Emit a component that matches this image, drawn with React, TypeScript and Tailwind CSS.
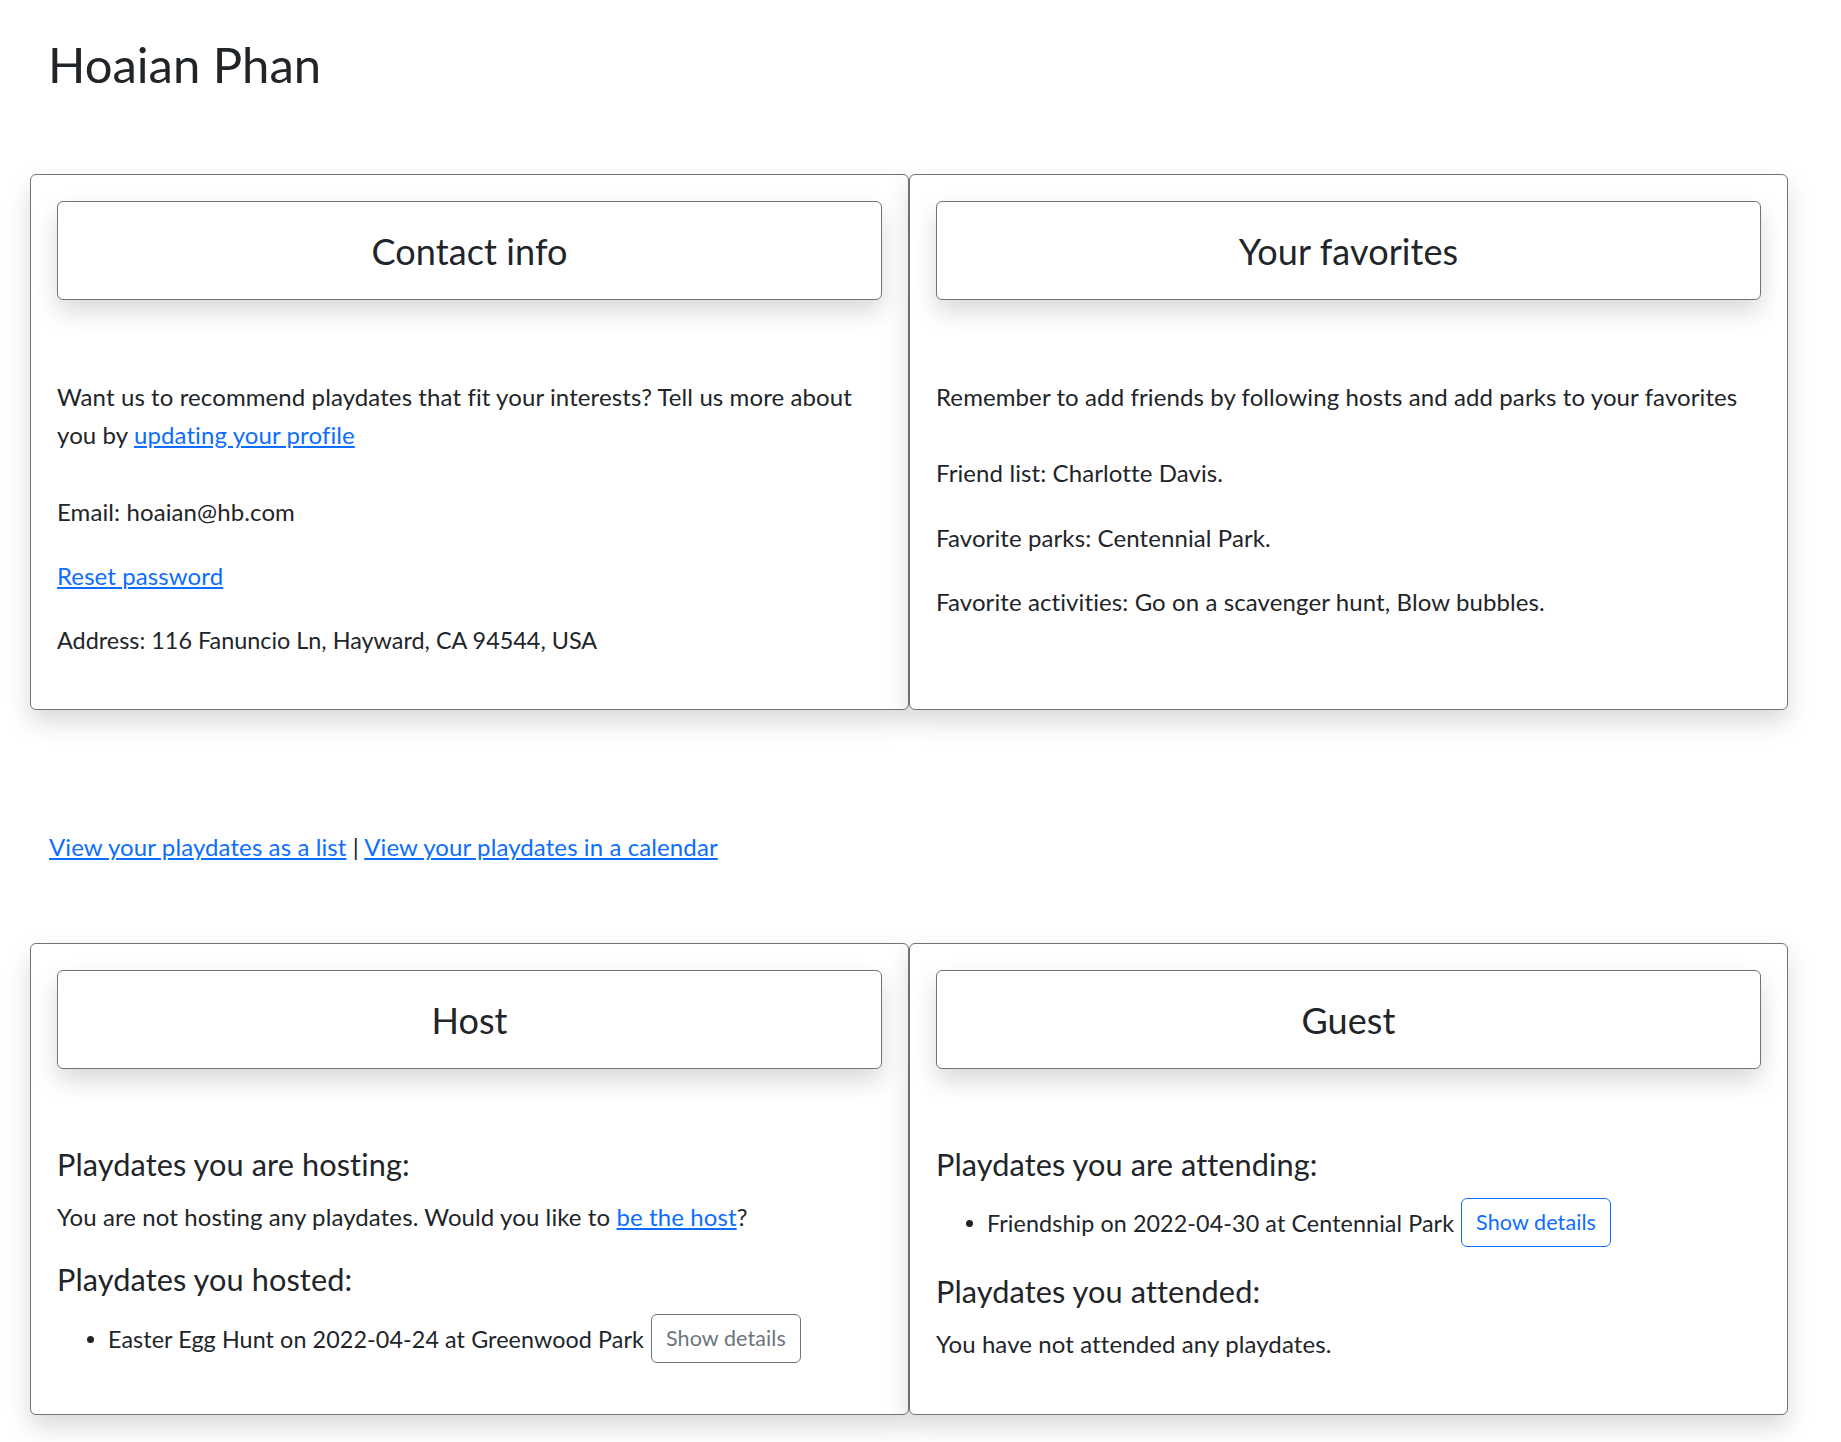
import React from 'react';

type Playdate = {
  title: string;
  date: string;
  park: string;
};

const hosted: Playdate[] = [{ title: 'Easter Egg Hunt', date: '2022-04-24', park: 'Greenwood Park' }];
const attending: Playdate[] = [{ title: 'Friendship', date: '2022-04-30', park: 'Centennial Park' }];

function SectionCard({ title, children }: { title: string; children: React.ReactNode }) {
  return (
    <div className="rounded-md border border-[#6c757d] bg-white p-[26px] shadow-[0_12px_25px_rgba(0,0,0,0.15)]">
      <div className="flex h-[99px] items-center justify-center rounded-md border border-[#6c757d] bg-white text-[36px] shadow-[0_12px_25px_rgba(0,0,0,0.15)]">
        {title}
      </div>
      <div className="pt-[78px]">{children}</div>
    </div>
  );
}

function PlaydateItem({ item, variant }: { item: Playdate; variant: 'secondary' | 'primary' }) {
  const btn =
    variant === 'primary'
      ? 'border-[#0d6efd] text-[#0d6efd]'
      : 'border-[#6c757d] text-[#6c757d]';
  return (
    <li className="flex items-center text-[23.3px]">
      <span className="relative">
        <span className="absolute left-[-21px] top-[16px] h-[7px] w-[7px] rounded-full bg-[#212529]" />
        {item.title} on {item.date} at {item.park}
      </span>
      <button
        type="button"
        className={`ml-[7px] h-[49px] rounded-md border bg-white px-[14px] text-[21.5px] leading-none ${btn}`}
      >
        Show details
      </button>
    </li>
  );
}

export default function App() {
  return (
    <div
      className="min-h-screen bg-white text-[24px] leading-[38px] tracking-[0.1px] text-[#212529]"
      style={{ fontFamily: 'Lato, "Open Sans", sans-serif' }}
    >
      <div className="pl-[30px] pr-[53px] pb-[28px]">
        <h1 className="ml-[18px] mt-[34px] text-[49px] leading-[60px] tracking-normal">Hoaian Phan</h1>

        <div className="mt-[80px] grid grid-cols-2">
          <SectionCard title="Contact info">
            <p className="mb-[39px]">
              Want us to recommend playdates that fit your interests? Tell us more about you by{' '}
              <a href="#" className="text-[#0d6efd] underline">
                updating your profile
              </a>
            </p>
            <p className="mb-[26px]">Email: hoaian@hb.com</p>
            <p className="mb-[26px]">
              <a href="#" className="text-[#0d6efd] underline">
                Reset password
              </a>
            </p>
            <p className="mb-[24px] text-[23.4px] tracking-normal">Address: 116 Fanuncio Ln, Hayward, CA 94544, USA</p>
          </SectionCard>

          <SectionCard title="Your favorites">
            <p className="mb-[38px]">Remember to add friends by following hosts and add parks to your favorites</p>
            <p className="mb-[27px]">Friend list: Charlotte Davis.</p>
            <p className="mb-[26px]">Favorite parks: Centennial Park.</p>
            <p>Favorite activities: Go on a scavenger hunt, Blow bubbles.</p>
          </SectionCard>
        </div>

        <p className="ml-[19px] mt-[118px]">
          <a href="#" className="text-[#0d6efd] underline">
            View your playdates as a list
          </a>{' '}
          |{' '}
          <a href="#" className="text-[#0d6efd] underline">
            View your playdates in a calendar
          </a>
        </p>

        <div className="mt-[77px] grid grid-cols-2">
          <SectionCard title="Host">
            <h4 className="mb-[15px] text-[30.7px] leading-[36px]">Playdates you are hosting:</h4>
            <p className="mb-[26px]">
              You are not hosting any playdates. Would you like to{' '}
              <a href="#" className="text-[#0d6efd] underline">
                be the host
              </a>
              ?
            </p>
            <h4 className="mb-[16px] text-[30.7px] leading-[36px]">Playdates you hosted:</h4>
            <ul className="mb-[25px] pl-[51px]">
              {hosted.map((p) => (
                <PlaydateItem key={p.title} item={p} variant="secondary" />
              ))}
            </ul>
          </SectionCard>

          <SectionCard title="Guest">
            <h4 className="mb-[15px] text-[30.7px] leading-[36px]">Playdates you are attending:</h4>
            <ul className="mb-[27px] pl-[51px]">
              {attending.map((p) => (
                <PlaydateItem key={p.title} item={p} variant="primary" />
              ))}
            </ul>
            <h4 className="mb-[15px] text-[30.7px] leading-[36px]">Playdates you attended:</h4>
            <p>You have not attended any playdates.</p>
          </SectionCard>
        </div>
      </div>
    </div>
  );
}
